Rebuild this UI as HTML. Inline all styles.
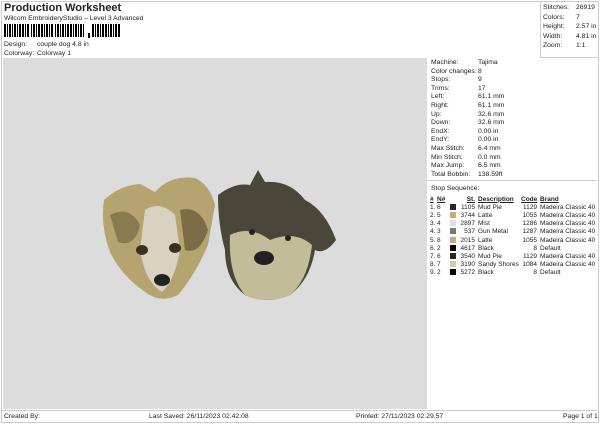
<!DOCTYPE html><html><head><style>
body{margin:0;width:600px;height:424px;background:#fff;font-family:"Liberation Sans",sans-serif;font-size:6.8px;color:#222;position:relative;overflow:hidden}
.a{position:absolute;white-space:nowrap}
.box{position:absolute;border:1px solid #ccc}
table{border-collapse:collapse;font-size:6.5px;table-layout:fixed;width:167px}
td{padding:0;height:8.2px;white-space:nowrap;overflow:visible}
.sw{display:inline-block;width:6px;height:6px;vertical-align:-1px}
.p{padding-left:3px}
</style></head><body>
<div class="box" style="left:1px;top:1px;width:596px;height:420px"></div>
<div class="box" style="left:540px;top:1px;width:57px;height:56px;border-top:0;border-right:0"></div>
<div class="a" style="left:4px;top:2px;font-size:11px;font-weight:bold">Production Worksheet</div>
<div class="a" style="left:4px;top:15px">Wilcom EmbroideryStudio – Level 3 Advanced</div>
<svg class="a" style="left:4px;top:24px" width="118" height="14"><g fill="#000">
<rect x="0" width="2" height="13"/><rect x="3" width="1" height="13"/><rect x="5" width="2" height="13"/><rect x="8" width="1" height="13"/><rect x="10" width="2" height="13"/><rect x="13" width="1" height="13"/><rect x="15" width="2" height="13"/><rect x="18" width="2" height="13"/><rect x="21" width="1" height="13"/><rect x="23" width="2" height="13"/><rect x="27" width="1" height="13"/><rect x="29" width="2" height="13"/><rect x="32" width="1" height="13"/><rect x="34" width="2" height="13"/><rect x="37" width="2" height="13"/><rect x="40" width="1" height="13"/><rect x="42" width="2" height="13"/><rect x="45" width="1" height="13"/><rect x="47" width="2" height="13"/><rect x="51" width="1" height="13"/><rect x="53" width="2" height="13"/><rect x="56" width="1" height="13"/><rect x="58" width="2" height="13"/><rect x="61" width="1" height="13"/><rect x="63" width="2" height="13"/><rect x="66" width="2" height="13"/><rect x="69" width="1" height="13"/><rect x="71" width="2" height="13"/><rect x="74" width="1" height="13"/><rect x="76" width="2" height="13"/><rect x="79" width="1" height="13"/><rect x="84" y="9" width="2" height="5"/><rect x="88" width="2" height="13"/><rect x="91" width="1" height="13"/><rect x="93" width="2" height="13"/><rect x="96" width="1" height="13"/><rect x="98" width="2" height="13"/><rect x="101" width="2" height="13"/><rect x="104" width="1" height="13"/><rect x="106" width="2" height="13"/><rect x="109" width="1" height="13"/><rect x="111" width="2" height="13"/><rect x="114" width="2" height="13"/></g></svg>
<div class="a" style="left:4px;top:41px">Design:</div><div class="a" style="left:37px;top:41px">couple dog 4,8 in</div>
<div class="a" style="left:4px;top:50px">Colorway:</div><div class="a" style="left:37px;top:50px">Colorway 1</div>
<div class="a" style="left:543px;top:3px;line-height:9.6px">Stitches:<br>Colors:<br>Height:<br>Width:<br>Zoom:</div>
<div class="a" style="left:576px;top:3px;line-height:9.6px">26919<br>7<br>2.57 in<br>4.81 in<br>1:1</div>
<div class="a" style="left:3px;top:58px;width:424px;height:351px;background:#dcdcdc"></div>
<svg class="a" style="left:100px;top:170px" width="245" height="135">
<path d="M4 30 Q20 15 40 14 L55 22 Q70 5 95 8 Q110 15 115 35 L108 75 Q95 105 78 125 Q62 133 48 124 Q22 107 10 82 Q0 55 4 30Z" fill="#b6a470"/>
<path d="M45 40 Q60 30 75 45 L80 80 Q75 110 62 122 Q45 112 40 80Z" fill="#d8d2c0"/>
<path d="M10 45 Q30 35 40 55 Q35 78 18 72Z" fill="#8a7a50"/>
<path d="M80 40 Q100 35 108 60 Q100 85 85 80Z" fill="#7d6c48"/>
<ellipse cx="42" cy="80" rx="6" ry="5" fill="#3a3020"/><ellipse cx="75" cy="78" rx="6" ry="5" fill="#3a3020"/>
<ellipse cx="62" cy="110" rx="8" ry="6" fill="#222"/>
<path d="M118 25 Q135 12 150 15 L158 0 L165 12 Q190 10 205 30 Q225 40 236 70 Q225 85 215 80 Q210 110 190 125 Q165 135 145 125 Q125 110 125 80 Q118 55 118 25Z" fill="#4a463a"/>
<path d="M130 65 Q150 55 170 70 Q195 60 212 75 Q208 110 190 125 Q165 135 145 125 Q128 105 130 65Z" fill="#c2bc98"/>
<ellipse cx="164" cy="88" rx="10" ry="7" fill="#222"/>
<circle cx="152" cy="62" r="3" fill="#222"/><circle cx="188" cy="68" r="3" fill="#222"/>
</svg>
<div class="a" style="left:431px;top:59px;line-height:8.6px">Machine:<br>Color changes:<br>Stops:<br>Trims:<br>Left:<br>Right:<br>Up:<br>Down:<br>EndX:<br>EndY:<br>Max Stitch:<br>Min Stitch:<br>Max Jump:<br>Total Bobbin:</div>
<div class="a" style="left:478px;top:59px;line-height:8.6px">Tajima<br>8<br>9<br>17<br>61.1 mm<br>61.1 mm<br>32.6 mm<br>32.6 mm<br>0.00 in<br>0.00 in<br>6.4 mm<br>0.0 mm<br>6.5 mm<br>138.59ft</div>
<div class="box" style="left:427px;top:180px;width:170px;height:0;border-width:1px 0 0 0"></div>
<div class="a" style="left:431px;top:185px">Stop Sequence:</div>
<table class="a" style="left:430px;top:195px">
<colgroup><col style="width:7px"><col style="width:13px"><col style="width:8px"><col style="width:17px"><col style="width:46px"><col style="width:16px"><col style="width:60px"></colgroup>
<tr style="font-weight:bold;text-decoration:underline"><td>#</td><td>N#</td><td></td><td align=right>St.</td><td class=p>Description</td><td align=right>Code</td><td class=p>Brand</td></tr>
<tr><td>1.</td><td>6</td><td><span class="sw" style="background:#2c2620"></span></td><td align=right>1105</td><td class=p>Mud Pie</td><td align=right>1129</td><td class=p>Madeira Classic 40</td></tr>
<tr><td>2.</td><td>5</td><td><span class="sw" style="background:#c8aa7a"></span></td><td align=right>3744</td><td class=p>Latte</td><td align=right>1055</td><td class=p>Madeira Classic 40</td></tr>
<tr><td>3.</td><td>4</td><td><span class="sw" style="background:#ddd"></span></td><td align=right>2897</td><td class=p>Mist</td><td align=right>1286</td><td class=p>Madeira Classic 40</td></tr>
<tr><td>4.</td><td>3</td><td><span class="sw" style="background:#777"></span></td><td align=right>537</td><td class=p>Gun Metal</td><td align=right>1287</td><td class=p>Madeira Classic 40</td></tr>
<tr><td>5.</td><td>8</td><td><span class="sw" style="background:#c8aa7a"></span></td><td align=right>2015</td><td class=p>Latte</td><td align=right>1055</td><td class=p>Madeira Classic 40</td></tr>
<tr><td>6.</td><td>2</td><td><span class="sw" style="background:#000"></span></td><td align=right>4617</td><td class=p>Black</td><td align=right>8</td><td class=p>Default</td></tr>
<tr><td>7.</td><td>6</td><td><span class="sw" style="background:#2c2620"></span></td><td align=right>3540</td><td class=p>Mud Pie</td><td align=right>1129</td><td class=p>Madeira Classic 40</td></tr>
<tr><td>8.</td><td>7</td><td><span class="sw" style="background:#d8c8a8"></span></td><td align=right>3190</td><td class=p>Sandy Shores</td><td align=right>1084</td><td class=p>Madeira Classic 40</td></tr>
<tr><td>9.</td><td>2</td><td><span class="sw" style="background:#000"></span></td><td align=right>5272</td><td class=p>Black</td><td align=right>8</td><td class=p>Default</td></tr>
</table>
<div class="box" style="left:1px;top:410px;width:596px;height:0;border-width:1px 0 0 0"></div>
<div class="a" style="left:4px;top:413px">Created By:</div>
<div class="a" style="left:149px;top:413px">Last Saved: 26/11/2023 02.42.08</div>
<div class="a" style="left:356px;top:413px">Printed: 27/11/2023 02.29.57</div>
<div class="a" style="left:563px;top:413px">Page 1 of 1</div>
</body></html>
